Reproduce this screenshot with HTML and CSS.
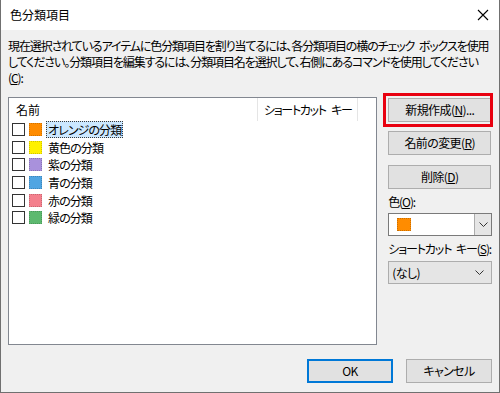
FILE: index.html
```html
<!DOCTYPE html>
<html lang="ja">
<head>
<meta charset="utf-8">
<title>色分類項目</title>
<link rel="stylesheet" href="styles.css">
</head>
<body>
<div class="window">
  <div class="titlebar">
    <span class="title">色分類項目</span>
    <svg class="close" width="12" height="12" viewBox="0 0 12 12"><path d="M1 1 L11 11 M11 1 L1 11" stroke="#000" stroke-width="1.1" fill="none"/></svg>
  </div>
  <div class="body">
    <p class="desc"><span>現在選択されているアイテムに色分類項目を割り当てるには、各分類項目の横のチェック ボックスを使用</span><br><span>してください。分類項目を編集するには、分類項目名を選択して、右側にあるコマンドを使用してください</span><br><span>(<u>C</u>):</span></p>
    <div class="main">
      <div class="list">
        <div class="list-head">
          <div class="col-name">名前</div>
          <div class="col-key">ショートカット キー</div>
        </div>
        <ul class="items">
          <li class="item"><span class="cb"></span><span class="sw orange"></span><span class="label selected">オレンジの分類</span></li>
          <li class="item"><span class="cb"></span><span class="sw yellow"></span><span class="label">黄色の分類</span></li>
          <li class="item"><span class="cb"></span><span class="sw purple"></span><span class="label">紫の分類</span></li>
          <li class="item"><span class="cb"></span><span class="sw blue"></span><span class="label">青の分類</span></li>
          <li class="item"><span class="cb"></span><span class="sw red"></span><span class="label">赤の分類</span></li>
          <li class="item"><span class="cb"></span><span class="sw green"></span><span class="label">緑の分類</span></li>
        </ul>
      </div>
      <div class="side">
        <button class="btn btn-new">新規作成(<u>N</u>)...</button>
        <button class="btn btn-rename">名前の変更(<u>R</u>)</button>
        <button class="btn btn-delete">削除(<u>D</u>)</button>
        <div class="field-label">色(<u>O</u>):</div>
        <div class="combo combo-color">
          <span class="combo-value"><span class="sw-big"></span></span>
          <span class="combo-arrow"><svg width="9" height="5" viewBox="0 0 9 5"><path d="M0.5 0.5 L4.5 4.5 L8.5 0.5" stroke="#333" fill="none"/></svg></span>
        </div>
        <div class="field-label">ショートカット キー(<u>S</u>):</div>
        <div class="combo combo-key">
          <span class="combo-text">(なし)</span>
          <svg width="9" height="5" viewBox="0 0 9 5"><path d="M0.5 0.5 L4.5 4.5 L8.5 0.5" stroke="#333" fill="none"/></svg>
        </div>
      </div>
    </div>
    <div class="footer">
      <button class="btn btn-ok">OK</button>
      <button class="btn btn-cancel">キャンセル</button>
    </div>
  </div>
  <div class="annot"></div>
</div>
</body>
</html>
```

FILE: styles.css
```css
* { box-sizing: border-box; }
html, body { margin: 0; padding: 0; background: #f0f0f0; }
body {
  font-family: "Noto Sans CJK JP", "Noto Sans", sans-serif;
  font-size: 12px;
  color: #000;
  font-feature-settings: "palt";
}
.window {
  position: relative;
  width: 500px;
  height: 393px;
  border: 1px solid #707070;
  border-top: none;
  background: #f0f0f0;
  display: flex;
  flex-direction: column;
  overflow: hidden;
}
.titlebar {
  height: 30px;
  background: #fff;
  display: flex;
  align-items: center;
  justify-content: space-between;
  padding: 0 10px 0 9px;
  flex: none;
}
.title { font-size: 12px; line-height: 16px; }
.close { display: block; }
.body {
  flex: 1;
  display: flex;
  flex-direction: column;
  padding: 8px 7px 9px 7px;
}
.desc {
  margin: 0;
  line-height: 16px;
  white-space: nowrap;
  letter-spacing: -1.1px;
  word-spacing: 3px;
}
.main {
  display: flex;
  margin-top: 11px;
  gap: 11px;
}
.list {
  width: 370px;
  height: 248px;
  background: #fff;
  border: 1px solid #828790;
}
.list-head {
  display: flex;
  height: 23px;
  align-items: stretch;
}
.col-name {
  width: 249px;
  padding-left: 7px;
  line-height: 23px;
  border-right: 1px solid #e5e5e5;
}
.col-key {
  width: 100px;
  padding-left: 6px;
  line-height: 23px;
  border-right: 1px solid #e5e5e5;
  white-space: nowrap;
  letter-spacing: -1.3px;
  word-spacing: 4px;
}
.items { list-style: none; margin: 0; padding: 0; }
.item {
  height: 17.6px;
  display: flex;
  align-items: center;
  padding-left: 3px;
}
.cb {
  width: 13px;
  height: 13px;
  border: 1px solid #333;
  background: #fff;
  flex: none;
}
.sw {
  width: 13px;
  height: 13px;
  margin-left: 4px;
  flex: none;
  border: 1px dotted rgba(0,0,0,0.18);
}
.orange { background: #ff8c00; }
.yellow { background: #fff100; }
.purple { background: #a991dc; }
.blue { background: #4fa5e2; }
.red { background: #f4808d; }
.green { background: #5db96f; }
.label {
  margin-left: 4px;
  padding: 0 1px;
  line-height: 15px;
  border: 1px solid transparent;
  white-space: nowrap;
  letter-spacing: -0.9px;
}
.label.selected {
  background: #cce8ff;
  border: 1px dotted #3a3a3a;
}
.side {
  width: 104px;
  display: flex;
  flex-direction: column;
}
.btn {
  font: inherit;
  font-feature-settings: "palt";
  color: #000;
  background: #e1e1e1;
  border: 1px solid #adadad;
  height: 24px;
  padding: 0;
  line-height: 20px;
  white-space: nowrap;
  letter-spacing: -0.6px;
}
.side .btn { width: 103px; }
.btn-new { margin-top: 1px; }
.btn-rename { margin-top: 9px; }
.btn-delete { margin-top: 10px; }
.field-label {
  margin-top: 5px;
  line-height: 16px;
  white-space: nowrap;
  letter-spacing: -1.1px;
  word-spacing: 3px;
}
.combo {
  margin-top: 3px;
  height: 23px;
  display: flex;
  align-items: center;
}
.combo-color {
  background: #fff;
  border: 1px solid #7a7a7a;
}
.combo-value {
  flex: 1;
  display: flex;
  align-items: center;
  padding-left: 8px;
}
.sw-big {
  width: 14px;
  height: 13px;
  background: #ff8c00;
  border: 1px dotted rgba(0,0,0,0.2);
}
.combo-arrow {
  width: 17px;
  height: 100%;
  background: #e5e5e5;
  border-left: 1px solid #acacac;
  display: flex;
  align-items: center;
  justify-content: center;
}
.combo-arrow svg, .combo-key svg { display: block; }
.combo-key {
  background: #e5e5e5;
  border: 1px solid #adadad;
  justify-content: space-between;
  padding: 0 7px 0 3px;
  letter-spacing: -0.6px;
}
.combo-key + .field-label { margin-top: 3px; }
.field-label + .combo-key { margin-top: 4px; }
.footer {
  margin-top: 14px;
  display: flex;
  justify-content: flex-end;
  gap: 13px;
}
.footer .btn { width: 86px; }
.btn-ok { border: 2px solid #0078d7; }
.annot {
  position: absolute;
  left: 382px;
  top: 93px;
  width: 110px;
  height: 34px;
  border: 3px solid #e8000f;
  pointer-events: none;
}
```
